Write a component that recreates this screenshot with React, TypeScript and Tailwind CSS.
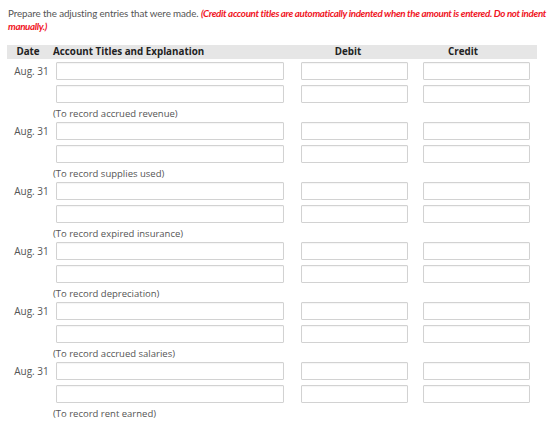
const entries = [
  "(To record accrued revenue)",
  "(To record supplies used)",
  "(To record expired insurance)",
  "(To record depreciation)",
  "(To record accrued salaries)",
  "(To record rent earned)",
]

function Field({ className }: { className: string }) {
  return (
    <input
      type="text"
      className={`h-[18px] rounded-[1px] border border-[#d2d2d2] bg-white shadow-[inset_0_1px_1px_rgba(0,0,0,0.04)] outline-none ${className}`}
    />
  )
}

function LineRow({ date }: { date?: string }) {
  return (
    <div className="flex items-center">
      <div className="w-[49px] text-center text-[10px] text-[#555]">{date}</div>
      <Field className="w-[228px]" />
      <Field className="ml-[17px] w-[107px]" />
      <Field className="ml-[15px] w-[107px]" />
    </div>
  )
}

export default function App() {
  return (
    <div
      className="h-[442px] w-[560px] overflow-hidden bg-white"
      style={{ fontFamily: '"Open Sans", "Liberation Sans", sans-serif' }}
    >
      <p
        className="pl-[8px] pr-[2px] pt-[7px] text-[9.8px] leading-[13px] tracking-[-0.1px] text-[#555]"
        style={{ fontFamily: 'Lato, "Open Sans", sans-serif' }}
      >
        Prepare the adjusting entries that were made.{" "}
        <span className="font-bold italic tracking-[-0.35px] text-[#f0141e]">
          (Credit account titles are automatically indented when the amount is entered. Do not indent manually.)
        </span>
      </p>

      <div className="ml-[7px] mt-[12px] w-[530px]">
        <div className="flex h-[14px] items-center bg-[#e6e6e6] text-[9.8px] font-bold text-[#222]">
          <div className="w-[42px] text-center">Date</div>
          <div className="w-[246px] pl-[4px]">Account Titles and Explanation</div>
          <div className="w-[106px] text-center">Debit</div>
          <div className="w-[124px] text-center">Credit</div>
        </div>

        <div className="pt-[3px]">
          {entries.map((note) => (
            <div key={note} className="h-[60px]">
              <LineRow date="Aug. 31" />
              <div className="mt-[5px]">
                <LineRow />
              </div>
              <div className="h-[19px] pl-[46px] pt-[4px] text-[9.5px] leading-[13px] text-[#555]">{note}</div>
            </div>
          ))}
        </div>
      </div>
    </div>
  )
}
